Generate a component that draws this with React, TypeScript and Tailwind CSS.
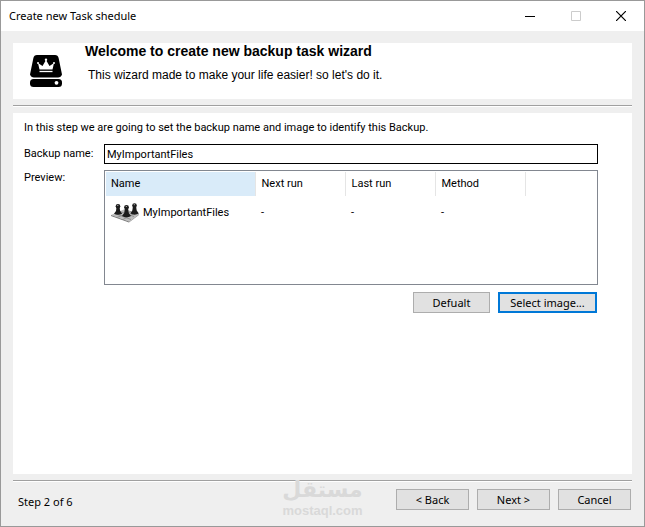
import React, { useState } from 'react';

interface Task {
  nextRun: string;
  lastRun: string;
  method: string;
}

const task: Task = { nextRun: '-', lastRun: '-', method: '-' };

const DriveIcon = () => (
  <svg width="32" height="32" viewBox="0 0 32 32" aria-hidden="true">
    <path d="M7 0h18q3 0 3.600 3L32 19.500Q31 22.500 28 22.500H4Q1 22.500 0 19.500L3.400 3Q4 0 7 0Z" fill="#000" />
    <rect x="0" y="24" width="32" height="8" rx="3.500" fill="#000" />
    <circle cx="26.500" cy="27.800" r="1.900" fill="#fff" />
    <path d="M9.500 14.500 8 8l4.500 3L16 5l3.500 6L24 8l-1.500 6.500Z" fill="#fff" />
    <path d="M9.500 16.500h13" stroke="#fff" strokeWidth="1.300" />
    <g fill="#fff">
      <circle cx="8" cy="8" r="1" />
      <circle cx="16" cy="4.700" r="1.200" />
      <circle cx="24" cy="8" r="1" />
    </g>
  </svg>
);

// Three pawns standing on a board
const PawnsIcon = () => (
  <svg width="28" height="20" viewBox="0 0 28 20" className="shrink-0" aria-hidden="true">
    <path d="M0 12 14 6l14 5-10 7.500Z" fill="#bdbdbd" />
    <path d="m0 12 18 6.500v1L0 13Z" fill="#777" />
    <path d="m18 18.500 10-7.500v1l-10 7.500Z" fill="#999" />
    <path d="m4 10.500 16 6M9 8.500l14 5M6 14.500l14-6M12 16.500l13-7" stroke="#858585" strokeWidth="0.800" />
    <g fill="#1c1c1c">
      <circle cx="7" cy="3.300" r="2.300" />
      <path d="M5.500 4h3l.7 4 2 2.700q-4.200 2.300-8.200 0L5 8Z" />
      <circle cx="15.500" cy="4.300" r="2.400" />
      <path d="M14 5h3l.8 5 2.200 3q-4.500 2.400-9 0l2.200-3Z" />
      <circle cx="23.500" cy="2.500" r="2.300" />
      <path d="M22 3h3l.7 4.500 2.100 3q-4.200 2.300-8.500 0l2-3Z" />
    </g>
    <path d="M6.300 2.500h1M14.800 3.500h1M22.800 1.700h1" stroke="#bbb" />
  </svg>
);

const Divider = () => <div className="h-[2px] mx-3 bg-white border-t border-[#a0a0a0]" />;

interface WizardButtonProps {
  children: React.ReactNode;
  className?: string;
}

const WizardButton: React.FC<WizardButtonProps> = ({ children, className = 'w-[73px] border border-[#adadad]' }) => (
  <button
    type="button"
    className={`h-[21px] flex items-center justify-center bg-[#e1e1e1] font-['Noto_Sans',sans-serif] leading-4 ${className}`}
  >
    {children}
  </button>
);

const App: React.FC = () => {
  const [name, setName] = useState('MyImportantFiles');

  return (
    <div className="relative min-h-screen flex flex-col border border-[#999999] bg-[#efefef] text-black font-['Noto_Sans',sans-serif] text-[11px] leading-4">
      <header className="h-[30px] flex items-center justify-between bg-white pl-2">
        <h1>Create new Task shedule</h1>
        <div className="flex">
          <button type="button" aria-label="Minimize" className="w-[46px] h-[28px] flex items-center justify-center">
            <svg width="10" height="10" viewBox="0 0 10 10"><path d="M0 5.500h10" stroke="#000" /></svg>
          </button>
          <button type="button" aria-label="Maximize" disabled className="w-[45px] h-[28px] flex items-center justify-center">
            <svg width="10" height="10" viewBox="0 0 10 10"><path d="M.5.500h9v9h-9Z" fill="none" stroke="#ccc" /></svg>
          </button>
          <button type="button" aria-label="Close" className="w-[46px] h-[28px] flex items-center justify-center">
            <svg width="10" height="10" viewBox="0 0 10 10"><path d="m0 0 10 10M10 0 0 10" stroke="#000" strokeWidth="1.200" /></svg>
          </button>
        </div>
      </header>

      <section className="mx-3 mt-3 mb-[6px] h-[56px] flex bg-white pl-[17px]">
        <div className="pt-3">
          <DriveIcon />
        </div>
        <div className="pl-[23px] font-['Liberation_Sans',Arial,sans-serif]">
          <h2 className="text-[14px] leading-4 font-bold">Welcome to create new backup task wizard</h2>
          <p className="pl-[3px] pt-2 text-[12px] leading-4">This wizard made to make your life easier! so let's do it.</p>
        </div>
      </section>
      <Divider />

      <main className="mx-3 mt-[6px] mb-[6px] flex-1 bg-white pl-[11px] pr-[34px] pt-[7px] font-['Roboto',sans-serif]">
        <p>In this step we are going to set the backup name and image to identify this Backup.</p>
        <div className="mt-2 grid grid-cols-[80px_1fr] gap-y-[6px]">
          <label htmlFor="backup-name" className="leading-5">Backup name:</label>
          <input
            id="backup-name"
            type="text"
            value={name}
            onChange={(e) => setName(e.target.value)}
            className="h-5 min-w-0 border border-black bg-white px-[2px] outline-none"
          />
          <div id="preview-label">Preview:</div>
          <div className="h-[115px] border border-[#828790] p-px">
            <table aria-labelledby="preview-label" className="w-full table-fixed text-left">
              <thead>
                <tr className="h-[24px]">
                  <th className="w-[149px] bg-[#d9ebf9] border-r border-[#e5e5e5] pl-[5px] font-normal">Name</th>
                  <th className="w-[90px] border-r border-[#e5e5e5] pl-[6px] font-normal">Next run</th>
                  <th className="w-[90px] border-r border-[#e5e5e5] pl-[6px] font-normal">Last run</th>
                  <th className="w-[90px] border-r border-[#e5e5e5] pl-[6px] font-normal">Method</th>
                  <td></td>
                </tr>
              </thead>
              <tbody>
                <tr className="h-[34px]">
                  <td className="pl-[5px]">
                    <div className="flex items-center gap-1">
                      <PawnsIcon />
                      <span>{name}</span>
                    </div>
                  </td>
                  <td className="pl-[6px]">{task.nextRun}</td>
                  <td className="pl-[6px]">{task.lastRun}</td>
                  <td className="pl-[6px]">{task.method}</td>
                  <td></td>
                </tr>
              </tbody>
            </table>
          </div>
        </div>
        <div className="mt-[7px] mr-px flex justify-end gap-2">
          <WizardButton className="w-[77px] border border-[#adadad]">Defualt</WizardButton>
          <WizardButton className="w-[99px] border-2 border-[#0078d7]">Select image...</WizardButton>
        </div>
      </main>

      <Divider />
      <footer className="flex items-center justify-between pl-[17px] pr-[13px] pt-[7px] pb-4">
        <span className="pt-1">Step 2 of 6</span>
        <div className="flex gap-2">
          <WizardButton>&lt; Back</WizardButton>
          <WizardButton>Next &gt;</WizardButton>
          <WizardButton>Cancel</WizardButton>
        </div>
      </footer>

      {/* Watermark */}
      <div className="absolute bottom-[8px] left-1/2 -translate-x-1/2 flex flex-col items-center text-[#d9d9d9] pointer-events-none">
        <span lang="ar" dir="rtl" className="font-['DejaVu_Sans',sans-serif] font-bold text-[22px] leading-[26px]">مستقل</span>
        <span className="font-['Liberation_Sans',Arial,sans-serif] font-bold text-[13px] leading-[15px]">mostaql.com</span>
      </div>
    </div>
  );
};

export default App;
